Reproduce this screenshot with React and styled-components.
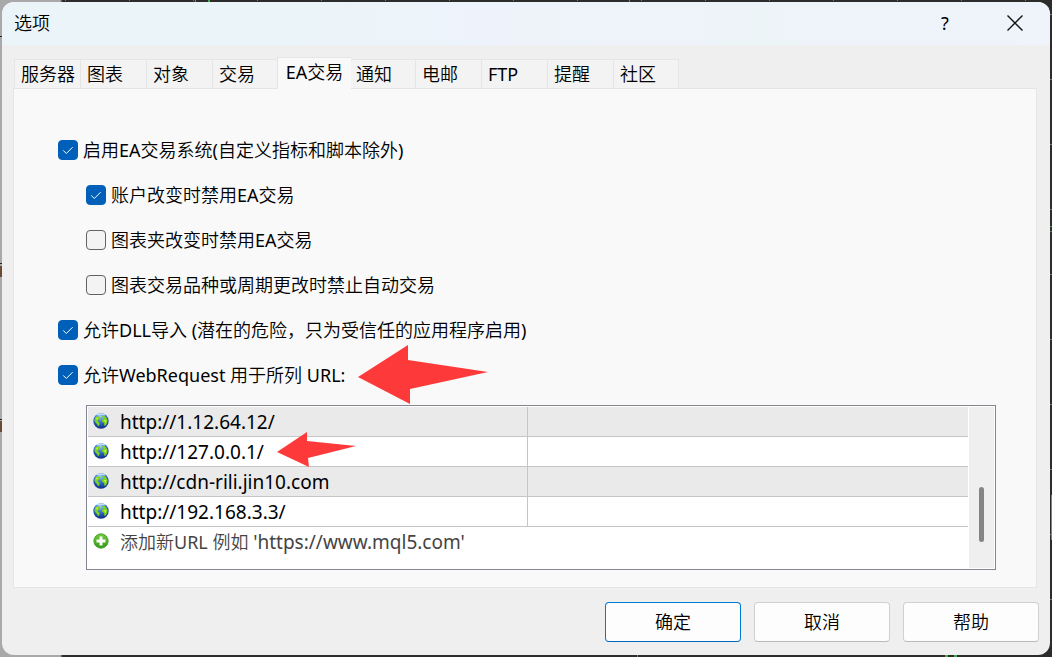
import React, { useState } from 'react'
import styled, { createGlobalStyle, css } from 'styled-components'

const GlobalStyle = createGlobalStyle`
  *, *::before, *::after {
    box-sizing: border-box;
  }

  body {
    margin: 0;
  }

  body, button, input {
    font-family: "Noto Sans", "Noto Sans CJK SC DemiLight", "Noto Sans CJK SC", sans-serif;
    font-size: 18px;
    font-weight: 400;
    line-height: 24px;
    color: #000;
  }
`

/* the chart application that stays visible around the dialog */
const Desktop = styled.div`
  display: flex;
  min-height: 100vh;
  padding: 2px;
  background:
    linear-gradient(#6b4a36, #6b4a36) 0 266px / 2px 11px no-repeat,
    linear-gradient(#6b4a36, #6b4a36) 0 421px / 2px 11px no-repeat,
    linear-gradient(#222, #222) 0 263px / 2px 1px no-repeat,
    linear-gradient(#222, #222) 0 419px / 2px 1px no-repeat,
    linear-gradient(#222, #222) 0 36px / 2px 1px no-repeat,
    linear-gradient(90deg, #a9a9a9 60px, #555 62px, transparent 62px),
    linear-gradient(#3fae49, #3fae49) 195px 0 / 1px 2px no-repeat,
    linear-gradient(#3fae49, #3fae49) 208px 0 / 2px 2px no-repeat,
    linear-gradient(#3fae49, #3fae49) 629px 0 / 1px 2px no-repeat,
    linear-gradient(#3fae49, #3fae49) 637px 100% / 1px 2px no-repeat,
    linear-gradient(#3fae49, #3fae49) 945px 100% / 3px 2px no-repeat,
    linear-gradient(#3fae49, #3fae49) 954px 100% / 3px 2px no-repeat,
    linear-gradient(#3fae49, #3fae49) 100% 495px / 1px 45px no-repeat,
    linear-gradient(#4c8a50, #4c8a50) 100% 226px / 2px 1px no-repeat,
    linear-gradient(#4c8a50, #4c8a50) 100% 231px / 2px 1px no-repeat,
    repeating-linear-gradient(90deg, transparent 0 1px, #777 1px 2px, transparent 2px 64px) 0 0 / 100% 1px no-repeat,
    repeating-linear-gradient(transparent 0 14px, #777 14px 15px, transparent 15px 65px) 100% 0 / 2px 100% no-repeat,
    #2c2c2c;
`

const Dialog = styled.section`
  flex: 1;
  min-width: 0;
  display: flex;
  flex-direction: column;
  overflow: hidden;
  border-radius: 12px;
  background: #efefef;
`

const TitleBar = styled.header`
  display: flex;
  align-items: center;
  height: 43px;
  padding: 0 0 2px 12px;
  background: linear-gradient(90deg, #ebf4f8 0%, #ebf4f8 28%, #eef3fb 48%, #edf4f8 72%, #eff3fb 100%);
`

const Title = styled.h1`
  flex: 1;
  margin: 0;
  font-size: 18px;
  line-height: 24px;
  font-weight: 400;
`

const CaptionButton = styled.button`
  display: flex;
  align-items: center;
  justify-content: center;
  width: 70px;
  height: 41px;
  padding: 0;
  border: 0;
  background: none;
`

const Body = styled.div`
  flex: 1;
  display: flex;
  flex-direction: column;
  padding: 12px 13px 0 11px;
`

const Tabs = styled.div`
  display: flex;
  align-items: flex-end;
  padding-left: 1px;
`

const Tab = styled.button`
  width: 66px;
  height: 29px;
  padding: 0 0 0 6px;
  border: 1px solid #e5e5e5;
  border-width: 1px 0 0 1px;
  background: #f3f3f3;
  text-align: left;
  white-space: nowrap;

  &:last-child {
    border-right-width: 1px;
  }

  ${({ $active }) => $active && css`
    z-index: 1;
    width: 74px;
    height: 32px;
    margin: 0 -2px -1px -1px;
    padding: 0 0 4px;
    background: #f9f9f9;
    text-align: center;
  `}
`

const Panel = styled.div`
  flex: 1;
  display: flex;
  flex-direction: column;
  padding: 51px 40px 17px 44px;
  border: 1px solid #e5e5e5;
  background: #f9f9f9;
`

const Options = styled.div`
  display: flex;
  flex-direction: column;
  gap: 25px;
  margin-bottom: 20px;
`

const Option = styled.label`
  position: relative;
  display: flex;
  align-items: center;
  gap: 5px;
  height: 20px;
  padding-left: ${({ $nested }) => ($nested ? '28px' : '0')};
  white-space: nowrap;
`

const Check = styled.span`
  position: relative;
  display: flex;
  width: 20px;
  height: 20px;

  svg {
    position: absolute;
    inset: 0;
    pointer-events: none;
  }
`

const CheckInput = styled.input`
  appearance: none;
  width: 20px;
  height: 20px;
  margin: 0;
  border: 1px solid #626262;
  border-radius: 4px;
  background: #f3f3f3;

  &:checked {
    border-color: #005fb8;
    background: #005fb8;
  }
`

const UrlBox = styled.div`
  flex: 1;
  display: flex;
  gap: 1px;
  margin-left: 28px;
  padding: 1px;
  border: 1px solid #828790;
  background: #fff;
`

const UrlTable = styled.table`
  flex: 1;
  align-self: flex-start;
  width: 100%;
  table-layout: fixed;
  border-collapse: separate;
  border-spacing: 0;
`

const UrlRow = styled.tr`
  background: #fff;

  &:nth-child(odd) {
    background: #eaeaea;
  }
`

const UrlCell = styled.td`
  height: 30px;
  padding: 0;
  border-bottom: 1px solid #c5c5c5;
  font-size: 19px;

  &:first-child {
    border-right: 1px solid #c5c5c5;
  }
`

const AddCell = styled.td`
  height: 30px;
  padding: 0;
`

const Entry = styled.div`
  position: relative;
  display: flex;
  align-items: center;
  gap: 11px;
  padding-left: 5px;
`

const AddButton = styled.button`
  display: flex;
  align-items: center;
  gap: 11px;
  padding: 0 0 0 5px;
  border: 0;
  background: none;
  color: #444;
`

const SampleUrl = styled.span`
  font-size: 19px;
`

const ScrollTrack = styled.div`
  display: flex;
  flex: none;
  justify-content: center;
  width: 25px;
  padding-top: 80px;
  background: #efefef;
`

const ScrollThumb = styled.div`
  width: 5px;
  height: 55px;
  border-radius: 3px;
  background: #858585;
`

const Footer = styled.footer`
  display: flex;
  justify-content: flex-end;
  gap: 13px;
  padding: 14px 11px 13px;
`

const ActionButton = styled.button`
  width: 136px;
  height: 40px;
  padding: 0;
  border: 1px solid ${({ $primary }) => ($primary ? '#0078d4' : '#d0d0d0')};
  border-bottom-color: ${({ $primary }) => ($primary ? '#0067c0' : '#bababa')};
  border-radius: 4px;
  background: #fdfdfd;
`

/* red pointers lie over the rows that they mark */
const Pointer = styled.svg`
  position: absolute;
  z-index: 2;
  pointer-events: none;
  left: ${({ $left }) => $left}px;
  top: ${({ $top }) => $top}px;
`

const Globe = () => (
  <svg width="16" height="18" viewBox="0 0 16 18" aria-hidden="true">
    <defs>
      <radialGradient id="sea" cx="45%" cy="20%" r="85%">
        <stop offset="0" stopColor="#a9d2f5" />
        <stop offset="0.35" stopColor="#3d80d6" />
        <stop offset="1" stopColor="#08257f" />
      </radialGradient>
    </defs>
    <circle cx="8" cy="8" r="7.7" fill="url(#sea)" />
    <path d="M1.4 7.4 2.4 4.2 5 3.2 7.2 4 7.4 5.4 5.6 6.8 4.6 8.2 6.4 9.4 6.6 11.4 5 13.4 4.4 11.4 2.6 9.6Z" fill="#7ed321" />
    <path d="M8.8 3.4 11 2.4 13.2 4.4 14.6 7.2 14 10.4 12.2 13 11.2 12.6 11.2 10 9 8.8 9.2 6.6 10.8 5.6Z" fill="#7ed321" />
    <path d="M3 4.8 5.4 4.4 3.8 7ZM10.8 7 13.4 7 12.4 10Z" fill="#c9f23c" />
    <path d="M4 2Q8 .2 12 2" fill="none" stroke="#d9ecfb" strokeWidth="1" />
  </svg>
)

const Plus = () => (
  <svg width="16" height="18" viewBox="0 0 16 18" aria-hidden="true">
    <defs>
      <linearGradient id="leaf" x1="0" y1="0" x2="0" y2="1">
        <stop offset="0" stopColor="#74c93c" />
        <stop offset="1" stopColor="#2f9a17" />
      </linearGradient>
    </defs>
    <circle cx="8" cy="8" r="7.2" fill="url(#leaf)" stroke="#3c9a22" strokeWidth="0.8" />
    <path d="M6.5 3.5h3v3h3v3h-3v3h-3v-3h-3v-3h3z" fill="#fff" />
  </svg>
)

const Tick = () => (
  <svg width="20" height="20" viewBox="0 0 20 20" aria-hidden="true">
    <path d="M5.2 10.4 8.3 13.5 14.6 7.2" fill="none" stroke="#fff" strokeWidth="1" />
  </svg>
)

const tabs = ['服务器', '图表', '对象', '交易', 'EA交易', '通知', '电邮', 'FTP', '提醒', '社区']

const options = [
  { id: 'ea', label: '启用EA交易系统(自定义指标和脚本除外)', checked: true },
  { id: 'account', label: '账户改变时禁用EA交易', checked: true, nested: true },
  { id: 'profile', label: '图表夹改变时禁用EA交易', checked: false, nested: true },
  { id: 'symbol', label: '图表交易品种或周期更改时禁止自动交易', checked: false, nested: true },
  { id: 'dll', label: '允许DLL导入 (潜在的危险，只为受信任的应用程序启用)', checked: true },
  { id: 'web', label: '允许WebRequest 用于所列 URL:', checked: true, marked: true },
]

const urls = [
  { url: 'http://1.12.64.12/' },
  { url: 'http://127.0.0.1/', marked: true },
  { url: 'http://cdn-rili.jin10.com' },
  { url: 'http://192.168.3.3/' },
]

const App = () => {
  const [activeTab, setActiveTab] = useState('EA交易')
  const [values, setValues] = useState(
    Object.fromEntries(options.map((option) => [option.id, option.checked]))
  )

  function handleChange(event) {
    const { name, checked } = event.target
    setValues({ ...values, [name]: checked })
  }

  return (
    <Desktop>
      <GlobalStyle />
      <Dialog>
        <TitleBar>
          <Title>选项</Title>
          <CaptionButton type="button">?</CaptionButton>
          <CaptionButton type="button" aria-label="关闭">
            <svg width="16" height="16" viewBox="0 0 16 16">
              <path d="M.5.5 15.5 15.5M15.5.5.5 15.5" stroke="#111" strokeWidth="1.4" />
            </svg>
          </CaptionButton>
        </TitleBar>
        <Body>
          <Tabs role="tablist">
            {tabs.map((tab) => (
              <Tab
                key={tab}
                type="button"
                role="tab"
                aria-selected={tab === activeTab}
                $active={tab === activeTab}
                onClick={() => setActiveTab(tab)}
              >
                {tab}
              </Tab>
            ))}
          </Tabs>
          <Panel role="tabpanel">
            <Options>
              {options.map((option) => (
                <Option key={option.id} $nested={option.nested}>
                  <Check>
                    <CheckInput
                      type="checkbox"
                      name={option.id}
                      checked={values[option.id]}
                      onChange={handleChange}
                    />
                    {values[option.id] && <Tick />}
                  </Check>
                  {option.label}
                  {option.marked && (
                    <Pointer $left={300} $top={-20} width="130" height="60" viewBox="0 0 130 60">
                      <path d="M0 32 50 0V15L130 27 52 44V59Z" fill="#fd3a39" />
                    </Pointer>
                  )}
                </Option>
              ))}
            </Options>
            <UrlBox>
              <UrlTable>
                <tbody>
                  {urls.map((item) => (
                    <UrlRow key={item.url}>
                      <UrlCell>
                        <Entry>
                          <Globe />
                          {item.url}
                          {item.marked && (
                            <Pointer $left={189} $top={-8} width="80" height="36" viewBox="0 0 80 36">
                              <path d="M0 20 30 0V9L79 14 31 26 32 35Z" fill="#fd3a39" />
                            </Pointer>
                          )}
                        </Entry>
                      </UrlCell>
                      <UrlCell />
                    </UrlRow>
                  ))}
                  <tr>
                    <AddCell colSpan={2}>
                      <AddButton type="button">
                        <Plus />
                        <span>添加新URL 例如 <SampleUrl>'https://www.mql5.com'</SampleUrl></span>
                      </AddButton>
                    </AddCell>
                  </tr>
                </tbody>
              </UrlTable>
              <ScrollTrack>
                <ScrollThumb />
              </ScrollTrack>
            </UrlBox>
          </Panel>
        </Body>
        <Footer>
          <ActionButton type="button" $primary>确定</ActionButton>
          <ActionButton type="button">取消</ActionButton>
          <ActionButton type="button">帮助</ActionButton>
        </Footer>
      </Dialog>
    </Desktop>
  )
}

export default App
